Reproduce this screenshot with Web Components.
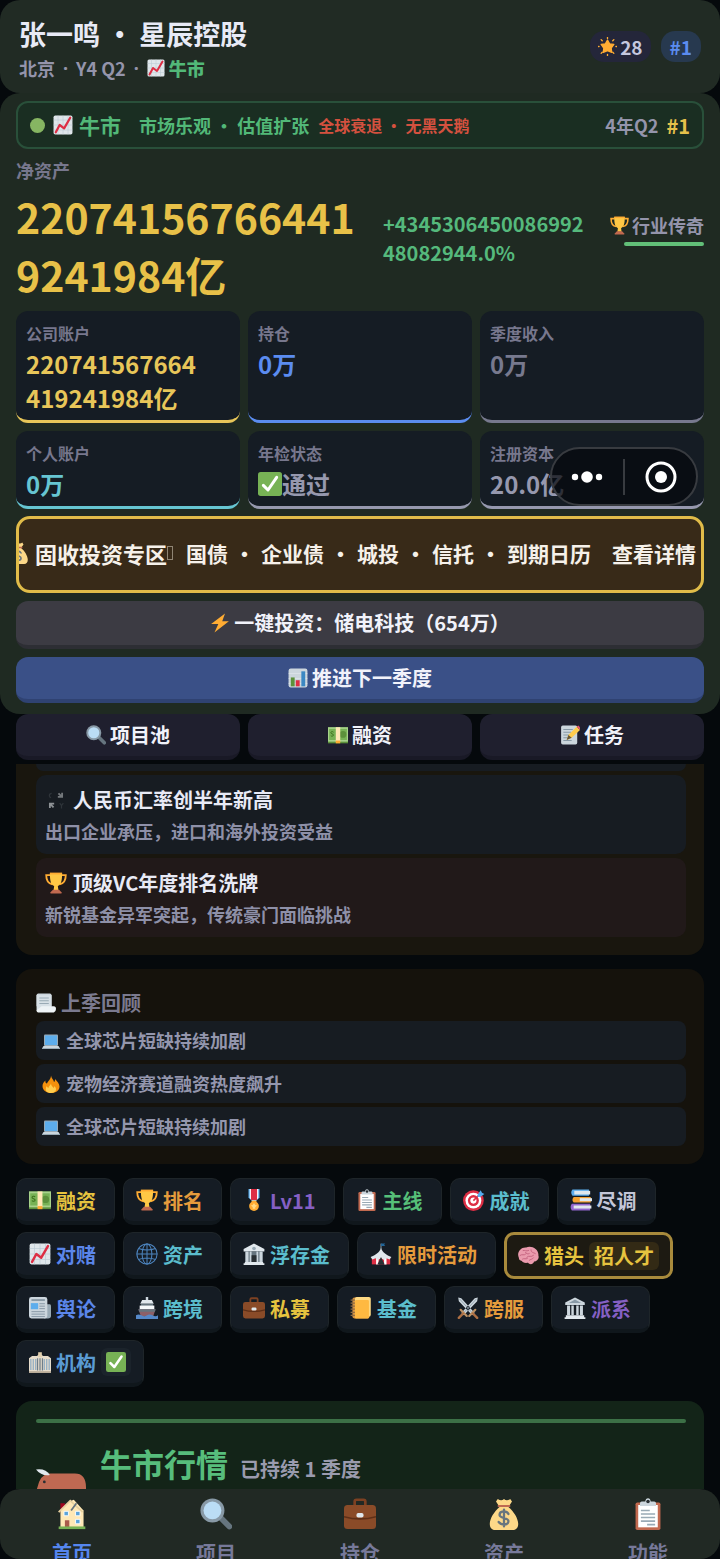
<!DOCTYPE html>
<html lang="zh-CN">
<head>
<meta charset="utf-8">
<meta name="viewport" content="width=device-width, initial-scale=1">
<title>星辰控股</title>
<style>
  html, body { height: 100%; margin: 0; }
  body {
    background: #05090c;
    color: #e8eaf6;
    font-family: "Noto Sans CJK SC", "Noto Sans", sans-serif;
    font-weight: 700;
    overflow: hidden;
  }
</style>
</head>
<body>
<game-app></game-app>

<script>
// ---------- icons, all on a 36 x 36 grid ----------
const ICONS = {
  chart: `<rect x="1" y="1" width="34" height="34" rx="3" fill="#dfe6ea"/><path d="M1 9h34M1 18h34M1 27h34M9 1v34M18 1v34M27 1v34" stroke="#b9c9d3" stroke-width="1"/><path d="M5 31l7-13 8 6L31 5" fill="none" stroke="#dd2e44" stroke-width="4" stroke-linecap="round" stroke-linejoin="round"/>`,
  sun: `<path d="M18 1v2M18 33v2M1 18h1M34 18h1M6 5l2 2M28 29l2 2M30 5l-2 2M6 31l2-2" stroke="#ffac33" stroke-width="2.6" stroke-linecap="round"/><path d="M18 6l4 7 8 1-5 7 1 8-8-3-8 3 1-8-5-7 8-1z" fill="#ffac33" stroke="#ffac33" stroke-width="2.5" stroke-linejoin="round"/>`,
  trophy: `<path d="M9 5H2c0 9 3 14 10 15M27 5h7c0 9-3 14-10 15" fill="none" stroke="#ffac33" stroke-width="3"/><path d="M8 2h20c0 13-2 19-7 21l1 7h-8l1-7C10 21 8 15 8 2z" fill="#ffc845"/><path d="M8 1h20v3H8z" fill="#ffac33"/><path d="M13 29h10l4 4v2H9v-2z" fill="#c1694f"/>`,
  check: `<rect width="36" height="36" rx="4" fill="#77b255"/><path d="M8 20l7 7L28 8" fill="none" stroke="#fff" stroke-width="4.5" stroke-linecap="round" stroke-linejoin="round"/>`,
  bag: `<path d="M11 1q4 3 7 0 3 3 7 0l2 3-4 6c6 5 11 13 11 19 0 4-2 7-6 7H8c-4 0-6-3-6-7C2 23 7 15 13 10L9 4z" fill="#fdd888"/><path d="M12 9h12" stroke="#bf6952" stroke-width="2.5" stroke-linecap="round"/><path d="M23 18c-2-4-10-4-10 1 0 4 10 3 10 7 0 5-8 5-11 1M18 13v19" fill="none" stroke="#67757f" stroke-width="2.6" stroke-linecap="round"/>`,
  bolt: `<path d="M27 1L2 20h13l-7 15L34 15H22z" fill="#ffac33"/>`,
  bars: `<rect x="1" y="1" width="34" height="34" rx="4" fill="#ccd6dd"/><path d="M1 10h34M1 19h34M1 28h34" stroke="#e6edf1"/><path d="M5 17h7v16H5z" fill="#5c913b"/><path d="M14 22h7v11h-7z" fill="#dd2e44"/><path d="M24 6h7v27h-7z" fill="#3b88c3"/>`,
  search: `<path d="M23 22l10 10" stroke="#66757f" stroke-width="6.5" stroke-linecap="round"/><circle cx="14" cy="14" r="13.5" fill="#8899a6"/><circle cx="14" cy="14" r="10" fill="#bbddf5"/>`,
  cash: `<path d="M0 4h36v29H0z" fill="#5c913b"/><path d="M0 4h36v26H0z" fill="#a7d28b"/><path d="M2 7h32v20H2z" fill="#77b255"/><circle cx="27" cy="17" r="6" fill="#5c913b"/><path d="M10 13c-2-2-5-1-5 1s5 2 5 4-4 3-5 1" fill="none" stroke="#3e721d" stroke-width="1.8"/><path d="M14 4h8v26h-8z" fill="#ffe8b6"/><path d="M14 28h8v5h-8z" fill="#ffac33"/>`,
  memo: `<rect x="2" y="1" width="29" height="34" rx="3" fill="#ccd6dd"/><path d="M6 8h17M6 13h14M6 18h10M6 23h8M6 28h15" stroke="#8899a6" stroke-width="2"/><path d="M12 27l3-9L30 3l6 6-15 14z" fill="#ffcc4d"/><path d="M30 3l3-2 4 4-1 4z" fill="#ea596e"/><path d="M12 27l3-9 6 5z" fill="#66573a"/>`,
  fx: `<path d="M22 7l6 6M28 6v7h-7" fill="none" stroke="#74787c" stroke-width="3"/><path d="M14 30l-6-6M8 31v-7h7" fill="none" stroke="#8d9195" stroke-width="3"/><path d="M11 7c-5 0-5 7-1 7M24 23l3 4 3-4M27 27v5" fill="none" stroke="#2e3439" stroke-width="2"/>`,
  scroll: `<path d="M1 4q0-3 3-3h21q3 0 3 3v20H1z" fill="#ccd6dd"/><path d="M1 4h27v28H1z" fill="#d7e0e6"/><path d="M6 9h17M6 14h17M6 19h17" stroke="#99aab5" stroke-width="2"/><path d="M10 24h22q4 0 4 5t-4 6H4q-3 0-3-4z" fill="#eef3f6"/>`,
  laptop: `<rect x="4" y="5" width="28" height="23" rx="2" fill="#99aab5"/><path d="M6 7h24v19H6z" fill="#5dadec"/><path d="M3 28h30l3 5H0z" fill="#ccd6dd"/><path d="M0 32h36v2H0z" fill="#99aab5"/>`,
  fire: `<path d="M18 1c1 6 5 8 6 13 2-1 2-4 2-6 4 5 9 9 9 15 0 8-7 13-17 13S1 30 1 22c0-5 3-9 6-11-1 4 1 6 3 6 2-5 8-9 8-16z" fill="#f4900c"/><path d="M18 17c0 5 4 6 5 9 1-1 2-3 2-4 7 8 1 14-7 14S5 32 9 22c1 2 2 3 4 4 0-4 4-5 5-9z" fill="#ffcc4d"/>`,
  medal: `<path d="M9 0h18v14l-6 6h-6l-6-6z" fill="#55acee"/><path d="M11 0h14v15l-4 4h-6l-4-4z" fill="#fff"/><path d="M13 0h10v18H13z" fill="#dd2e44"/><path d="M14 19h8v3h-8z" fill="#ffac33"/><circle cx="18" cy="28" r="8" fill="#ffac33"/><path d="M18 23l2 3 3 1-3 3v3l-2-1-2 1v-3l-3-3 3-1z" fill="#ffd983"/>`,
  clipboard: `<rect x="4" y="5" width="28" height="31" rx="2" fill="#c1694f"/><path d="M7 8h22v25H7z" fill="#fff"/><path d="M9 9V6q0-2 2-2h4c0-5 6-5 6 0h4q2 0 2 2v3z" fill="#ccd6dd"/><circle cx="18" cy="4" r="2" fill="#292f33"/><path d="M10 14h10M10 18h16M10 22h16M10 26h16M17 30h9" stroke="#99aab5" stroke-width="1.8"/>`,
  target: `<circle cx="17" cy="19" r="17" fill="#dd2e44"/><circle cx="17" cy="19" r="13" fill="#fff"/><circle cx="17" cy="19" r="9" fill="#dd2e44"/><circle cx="17" cy="19" r="5" fill="#fff"/><path d="M17 19L30 6" stroke="#dd2e44" stroke-width="2.5"/><path d="M24 9l5-7 2 4 4 2-7 5h-4z" fill="#55acee"/>`,
  books: `<path d="M4 1h27v10H4q-4-5 0-10z" fill="#5dadec"/><path d="M7 3h26v6H7z" fill="#e1e8ed"/><path d="M6 13h28v9H6q-4-4 0-9z" fill="#f4a12f"/><path d="M16 15h20v5H16z" fill="#e1e8ed"/><path d="M3 24h30v11H3q-4-6 0-11z" fill="#9266cc"/><path d="M6 27h29v5H6z" fill="#e1e8ed"/>`,
  globe: `<g fill="none" stroke="#4c83bd" stroke-width="1.7"><circle cx="18" cy="18" r="16.5"/><ellipse cx="18" cy="18" rx="8" ry="16.5"/><path d="M18 1v34M1 18h34M4 9q14 5 28 0M4 27q14-5 28 0"/></g>`,
  bank: `<path d="M18 1l17 9v4H1v-4z" fill="#e1e8ed"/><path d="M4 14h28v18H4z" fill="#66757f"/><path d="M4 14h5v18H4zM11 14h3v18h-3zM22 14h3v18h-3zM27 14h5v18h-5z" fill="#ccd6dd"/><path d="M14 20h8v12h-8z" fill="#292f33"/><path d="M3 31h30v2H3zM1 33h34v3H1z" fill="#e1e8ed"/><circle cx="18" cy="9" r="3" fill="#99aab5"/>`,
  temple: `<path d="M18 1l16 8v4H2V9z" fill="#ccd6dd"/><path d="M18 4l10 6H8z" fill="#8899a6"/><path d="M5 14h5v16H5zM12 14h4v16h-4zM20 14h4v16h-4zM26 14h5v16h-5z" fill="#ccd6dd"/><path d="M3 30h30v3H3zM1 33h34v3H1z" fill="#e1e8ed"/>`,
  tent: `<path d="M18 10V1" stroke="#99aab5" stroke-width="1.5"/><path d="M18 1h7l-2 2 2 2h-7z" fill="#226699"/><path d="M3 23h30v12H3z" fill="#dd2e44"/><path d="M10 23h4v12h-4zM23 23h4v12h-4z" fill="#fff"/><path d="M18 8c3 8 9 11 17 15l-3 4-5-2-4 3-5-3-5 3-4-3-5 2-3-4C9 19 15 16 18 8z" fill="#e1e8ed"/><path d="M18 23l6 12H12z" fill="#292f33"/>`,
  brain: `<path d="M3 21C-1 12 6 3 15 4c8-4 21 2 20 13 2 6-3 10-7 10-2 6-8 5-10 2-6 1-9-1-10-3-3 0-5-2-5-5z" fill="#ea9aad"/><path d="M5 17c4-3 6 1 9-2M10 9c3-1 5 2 9 0M16 20c4-4 7 1 11-3M23 8c0 5 4 4 7 6M9 23c3-2 5 1 8-1M27 21c-2 3-5 2-7 4M14 12c1 3 4 3 6 2" fill="none" stroke="#c5637f" stroke-width="1.6" stroke-linecap="round"/>`,
  news: `<path d="M25 12h9q2 0 2 3v16q0 4-5 4h-6z" fill="#99aab5"/><rect x="0" y="0" width="30" height="35" rx="4" fill="#ccd6dd"/><path d="M4 5h22" stroke="#8899a6" stroke-width="3"/><path d="M3 10h12v10H3z" fill="#5dadec"/><path d="M17 11h9M17 15h9M17 19h9M4 24h22M4 28h22M4 32h22" stroke="#8899a6" stroke-width="1.6"/>`,
  ship: `<path d="M16 0h4v7h-4z" fill="#ccd6dd"/><path d="M10 5h16l3 6H7z" fill="#e1e8ed"/><path d="M8 11h20v4H8z" fill="#66757f"/><path d="M6 14h24v7H6z" fill="#f5f8fa"/><path d="M4 20h28l-4 12H8z" fill="#8c6068"/><path d="M4 20h28l-1 4H5z" fill="#66757f"/><path d="M0 30q4-3 9 0t9 0 9 0 9 0v6H0z" fill="#5588c8"/>`,
  briefcase: `<path d="M12 8V4q0-2 2-2h8q2 0 2 2v4" fill="none" stroke="#7d4122" stroke-width="3"/><rect x="0" y="8" width="36" height="27" rx="4" fill="#8a4b28"/><path d="M0 21q18 5 36 0" fill="none" stroke="#5e2f17" stroke-width="1.8"/><rect x="14" y="17" width="8" height="5" rx="2" fill="#e1e8ed"/>`,
  ledger: `<rect x="4" y="1" width="28" height="34" rx="3" fill="#d69241"/><rect x="8" y="0" width="26" height="32" rx="3" fill="#ffd983"/><rect x="8" y="5" width="23" height="30" rx="2" fill="#ffb941"/><path d="M1 5h7M1 10h7M1 15h7M1 20h7M1 25h7M1 30h7" stroke="#8d6b43" stroke-width="2"/>`,
  swords: `<path d="M2 1l5 1 22 24-4 4L3 7zM34 1l-5 1L7 26l4 4L33 7z" fill="#ccd6dd"/><path d="M4 3l22 24M32 3L10 27" stroke="#8899a6" stroke-width="1.3"/><path d="M20 31l10-10M16 31L6 21" stroke="#be9366" stroke-width="3.5" stroke-linecap="round"/><path d="M26 27l7 7M10 27l-7 7" stroke="#ae7044" stroke-width="4" stroke-linecap="round"/>`,
  hotel: `<path d="M0 12l5-4h8l5-4 5 4h8l5 4v23H0z" fill="#e6dccb"/><path d="M15 2h6v8h-6z" fill="#e1cfae"/><path d="M3 13v18M7 13v18M11 13v18M25 13v18M29 13v18M33 13v18" stroke="#8fadc4" stroke-width="2"/><path d="M14 12v20M18 12v20M22 12v20" stroke="#6e7e8a" stroke-width="2"/><path d="M0 33h36v3H0z" fill="#b8ab98"/>`,
  house: `<path d="M5 6h5v10H5z" fill="#a0041e"/><path d="M5 14L15 4l5-2 11 12v19H5z" fill="#ffe8b6"/><path d="M3 16L16 3l14 13" fill="none" stroke="#e6d0a0" stroke-width="2"/><path d="M17 14l6-8" stroke="#66757f" stroke-width="2"/><path d="M9 15h5v5H9zM22 15h5v5h-5zM22 24h5v5h-5z" fill="#5da4d9" stroke="#fff"/><path d="M10 25h5v8h-5z" fill="#a95b4b"/><path d="M3 32h30v3H3z" fill="#77b255"/>`,
  ox: `<path d="M1 14Q3 5 9 4h19q8 0 8 10v16h-3V15l-1 21h-5v-9H12v9H7V24H2q-3-4-1-10z" fill="#bf6952"/><path d="M0 1q7-1 10 4-6 1-10-4z" fill="#e1e8ed"/><circle cx="6" cy="10" r="1" fill="#292f33"/>`
};

// Registers an element whose shadow root is cloned from a template.
function define(tag, html, setup) {
  const tpl = document.createElement('template');
  tpl.innerHTML = html;
  customElements.define(tag, class extends HTMLElement {
    constructor() {
      super();
      this.attachShadow({ mode: 'open' }).append(tpl.content.cloneNode(true));
    }
    connectedCallback() {
      if (this._ready) return;
      this._ready = true;
      if (setup) setup(this, this.shadowRoot);
    }
  });
}

define('ui-icon', `
  <style>
    :host { display: inline-block; flex: none; width: var(--icon, 20px); height: var(--icon, 20px); }
    svg { display: block; width: 100%; height: 100%; }
  </style>
  <svg viewBox="0 0 36 36" aria-hidden="true"></svg>
`, (el, root) => {
  root.querySelector('svg').innerHTML = ICONS[el.getAttribute('name')] || '';
});

define('app-header', `
  <style>
    :host {
      display: flex; align-items: center; justify-content: space-between;
      padding: 14px 19px 11px; border-radius: 20px; background: #212b24;
    }
    h1 { margin: 0; font-size: 27px; line-height: 40px; }
    p { display: flex; align-items: center; gap: 8px; margin: 0; font-size: 18px; line-height: 28px; color: #9494ab; --icon: 18px; }
    i { font-family: "Noto Sans", sans-serif; font-style: normal; }
    b { display: flex; align-items: center; gap: 4px; color: #52b878; }
    .pills { display: flex; gap: 10px; padding-bottom: 3px; --icon: 19px; }
    .pill {
      display: flex; align-items: center; gap: 3px; padding: 0 8px;
      border-radius: 14px; background: #24263a; color: #c5c8de; font-size: 19px; line-height: 31px;
    }
    .rank { padding: 0 9px; background: #27394f; color: #5b8cf0; }
  </style>
  <div>
    <h1>张一鸣 • 星辰控股</h1>
    <p>北京<i>·</i><span>Y4 Q2</span><i>·</i><b><ui-icon name="chart"></ui-icon>牛市</b></p>
  </div>
  <div class="pills">
    <span class="pill"><ui-icon name="sun"></ui-icon>28</span>
    <span class="pill rank">#1</span>
  </div>
`);

define('market-strip', `
  <style>
    :host {
      display: flex; align-items: center; box-sizing: border-box; min-height: 48px;
      padding: 0 12px; border: 2px solid #29503a; border-radius: 12px;
      background: #1a2e22; color: #52b878; font-size: 18px; white-space: nowrap;
    }
    i { width: 15px; height: 15px; margin-right: 8px; border-radius: 50%; background: #86b562; }
    .state { margin: 0 18px 0 6px; font-size: 21px; }
    .alert { margin-left: 9px; font-size: 16px; color: #d4513f; }
    .when { margin-left: auto; color: #9494ab; }
    .rank { margin-left: 8px; font-size: 20px; color: #e5c04b; }
  </style>
  <i></i><ui-icon name="chart"></ui-icon>
  <span class="state">牛市</span>
  <span>市场乐观 • 估值扩张</span>
  <span class="alert">全球衰退 • 无黑天鹅</span>
  <span class="when">4年Q2</span>
  <span class="rank">#1</span>
`);

define('net-worth', `
  <style>
    :host { display: block; padding: 8px 0; }
    .label { font-size: 18px; line-height: 26px; color: #77778d; }
    .row { display: grid; grid-template-columns: 5fr 3fr auto; gap: 17px; margin-top: 4px; }
    .total { font-size: 41px; line-height: 58px; color: #e8c148; word-break: break-all; }
    .change { padding-top: 22px; font-size: 20px; line-height: 29px; color: #55b97c; word-break: break-all; }
    .title { display: flex; flex-direction: column; align-items: flex-end; padding-top: 22px; }
    .title span { display: flex; align-items: center; gap: 3px; font-size: 18px; line-height: 32px; color: #9494ab; --icon: 19px; }
    .bar { width: 85%; height: 4px; margin-top: 1px; border-radius: 2px; background: #62bf78; }
  </style>
  <div class="label">净资产</div>
  <div class="row">
    <div class="total">220741567664419241984亿</div>
    <div class="change">+434530645008699248082944.0%</div>
    <div class="title"><span><ui-icon name="trophy"></ui-icon>行业传奇</span><div class="bar"></div></div>
  </div>
`);

define('stat-card', `
  <style>
    :host {
      display: block; padding: 10px 10px 5px; border-bottom: 3px solid var(--tone);
      border-radius: 12px; background: #151c24;
    }
    .label { font-size: 16px; line-height: 24px; color: #77778d; }
    .value {
      display: flex; align-items: center; max-width: 88%; margin-top: 2px;
      font-size: 24px; line-height: 34px; color: var(--tone); --icon: 24px; word-break: break-all;
    }
  </style>
  <div class="label"></div>
  <div class="value"><slot></slot></div>
`, (el, root) => {
  root.querySelector('.label').textContent = el.getAttribute('label');
});

// Floating host menu that sits over the cards
define('capsule-menu', `
  <style>
    :host {
      position: absolute; right: 22px; bottom: 208px; display: flex; align-items: center;
      box-sizing: border-box; width: 148px; height: 59px;
      border: 2px solid #383b40; border-radius: 30px; background: rgba(6, 9, 13, .72);
    }
    button { flex: 1; display: flex; justify-content: center; padding: 0; border: 0; background: none; }
    button + button { border-left: 2px solid #383b40; }
    svg { width: 36px; height: 36px; fill: #fff; }
  </style>
  <button aria-label="更多"><svg viewBox="0 0 36 36"><circle cx="5" cy="18" r="3.2"/><circle cx="17" cy="18" r="5.8"/><circle cx="29" cy="18" r="3.2"/></svg></button>
  <button aria-label="关闭"><svg viewBox="0 0 36 36"><circle cx="18" cy="18" r="14" fill="none" stroke="#fff" stroke-width="3"/><circle cx="18" cy="18" r="6"/></svg></button>
`);

define('bond-banner', `
  <style>
    :host { display: block; }
    button {
      display: flex; align-items: center; justify-content: flex-end; box-sizing: border-box;
      width: 100%; height: 77px; padding: 0 5px 3px 0; overflow: hidden;
      border: 3px solid #e0bc49; border-radius: 14px; background: #382a18;
      color: #f6f1ea; font: inherit; font-size: 21px; white-space: nowrap; --icon: 22px;
    }
    .name { margin-left: 6px; font-size: 22px; }
    .box { flex: none; box-sizing: border-box; width: 6px; height: 14px; margin: 0 13px 0 0; border: 1px solid #8f8574; }
    .kinds { display: flex; gap: 6px; }
    .more { margin-left: 21px; }
  </style>
  <button>
    <ui-icon name="bag"></ui-icon>
    <span class="name">固收投资专区</span><span class="box"></span>
    <span class="kinds"><span>国债</span> <span>•</span> <span>企业债</span> <span>•</span> <span>城投</span> <span>•</span> <span>信托</span> <span>•</span> <span>到期日历</span></span>
    <span class="more">查看详情</span>
  </button>
`);

define('action-button', `
  <style>
    :host { display: block; --face: #1f1f2e; --edge: #191926; }
    :host([kind="grey"]) { --face: #3c3b43; --edge: #2d2e34; }
    :host([kind="blue"]) { --face: #3a5087; --edge: #2f4272; }
    button {
      display: flex; align-items: center; justify-content: center; gap: 4px;
      box-sizing: border-box; width: 100%; min-height: 46px; padding: 0;
      border: 0; border-bottom: 4px solid var(--edge); border-radius: 12px;
      background: var(--face); color: #f1f2fa; font: inherit; font-size: 20px; line-height: 30px;
    }
    :host([kind="grey"]) button { min-height: 48px; }
  </style>
  <button><slot></slot></button>
`);

define('fold-card', `
  <style>
    :host {
      display: flex; flex-direction: column; gap: 4px;
      padding: 20px 18px 18px 20px; border-radius: 16px; background: #15120c;
    }
    :host([cut]) { padding-top: 0; border-radius: 0 0 16px 16px; background: #19160e; }
  </style>
  <slot></slot>
`);

define('news-item', `
  <style>
    :host { display: block; padding: 10px 9px 9px; border-radius: 10px; background: #171c22; }
    :host([hot]) { background: #211919; }
    h3 { display: flex; align-items: center; gap: 6px; margin: 0; font-size: 20px; line-height: 30px; --icon: 22px; }
    p { margin: 0; padding: 2px 0 0; font-size: 18px; line-height: 28px; color: #8e90a8; }
  </style>
  <h3><slot name="title"></slot></h3>
  <p><slot></slot></p>
`);

define('review-item', `
  <style>
    :host {
      display: flex; align-items: center; gap: 6px; padding: 0 6px; border-radius: 8px;
      background: #171c22; color: #9496ad; font-size: 18px; line-height: 39px; --icon: 18px;
    }
  </style>
  <slot></slot>
`);

define('tool-chip', `
  <style>
    :host { display: block; --icon: 22px; }
    button {
      display: flex; align-items: center; gap: 5px; box-sizing: border-box; height: 47px;
      padding: 0 18px 0 12px; border: 1px solid #1e2529; border-bottom: 4px solid #10171c;
      border-radius: 10px; background: #151c24; color: var(--tone); font: inherit; font-size: 20px;
    }
    slot[name="tag"]::slotted(*) {
      display: flex; align-items: center; height: 28px; padding: 0 5px;
      border-radius: 6px; background: #1b232b; --icon: 20px;
    }
    :host([tagged]) button { padding-right: 12px; }
    :host([glow]) button { border: 3px solid #a88a3c; background: #1d1a12; padding: 0 11px 0 10px; }
    :host([glow]) slot[name="tag"]::slotted(*) { background: #332a15; }
  </style>
  <button><slot></slot><slot name="tag"></slot></button>
`, (el, root) => {
  const icon = document.createElement('ui-icon');
  icon.setAttribute('name', el.getAttribute('icon'));
  root.querySelector('button').prepend(icon);
});

define('market-card', `
  <style>
    :host { display: block; padding: 18px 18px 0 20px; border-radius: 16px 16px 0 0; background: #132418; }
    .bar { height: 4px; border-radius: 2px; background: #3c7046; }
    .row { display: flex; align-items: flex-start; margin-top: 17px; --icon: 50px; }
    ui-icon { margin: 28px 14px 0 0; }
    h2 { display: flex; align-items: baseline; gap: 12px; margin: 0; font-size: 32px; line-height: 46px; color: #57bd7c; }
    small { font-size: 20px; color: #9a9bae; }
  </style>
  <div class="bar"></div>
  <div class="row"><ui-icon name="ox"></ui-icon><h2>牛市行情 <small>已持续 1 季度</small></h2></div>
`);

define('tab-item', `
  <style>
    :host { flex: 1; --icon: 32px; }
    a {
      display: flex; flex-direction: column; align-items: center; gap: 8px; padding-top: 9px;
      color: #77799a; font-size: 20px; line-height: 30px; text-decoration: none;
    }
    :host([active]) a { color: #5586ee; }
  </style>
  <a href="#"><slot></slot></a>
`);

define('tab-bar', `
  <style>
    :host {
      display: flex; flex: none; height: 70px; overflow: hidden;
      border-radius: 20px; background: #212924;
    }
  </style>
  <slot></slot>
`);

define('game-app', `
  <style>
    :host { display: flex; flex-direction: column; height: 100vh; }
    .panel { position: relative; padding: 8px 16px 11px; border-radius: 20px; background: #1f2a22; }
    .grid { display: grid; grid-template-columns: repeat(3, minmax(0, 1fr)); gap: 8px; }
    .stack { display: flex; flex-direction: column; gap: 8px; margin-top: 7px; }
    .quick { padding: 0 16px 4px; }
    .feed { flex: 1; min-height: 0; overflow: hidden; display: flex; flex-direction: column; padding: 0 16px; }
    .feed > * { flex: none; }
    .feed fold-card { margin-bottom: 14px; }
    .stub { height: 7px; border-radius: 0 0 10px 10px; background: #171c22; }
    h2 { display: flex; align-items: center; gap: 5px; margin: 0; font-size: 20px; line-height: 28px; color: #7b7a8f; }
    .chips { display: flex; flex-wrap: wrap; gap: 7px 8px; margin-bottom: 14px; }
  </style>
  <app-header></app-header>
  <section class="panel">
    <market-strip></market-strip>
    <net-worth></net-worth>
    <div class="grid">
      <stat-card label="公司账户" style="--tone:#e8c659">220741567664419241984亿</stat-card>
      <stat-card label="持仓" style="--tone:#5b8cf0">0万</stat-card>
      <stat-card label="季度收入" style="--tone:#77798e">0万</stat-card>
      <stat-card label="个人账户" style="--tone:#66c5d2">0万</stat-card>
      <stat-card label="年检状态" style="--tone:#9698ae"><ui-icon name="check"></ui-icon>通过</stat-card>
      <stat-card label="注册资本" style="--tone:#9698ae">20.0亿</stat-card>
    </div>
    <div class="stack">
      <bond-banner></bond-banner>
      <action-button kind="grey"><ui-icon name="bolt"></ui-icon>一键投资：储电科技（654万）</action-button>
      <action-button kind="blue"><ui-icon name="bars"></ui-icon>推进下一季度</action-button>
    </div>
    <capsule-menu></capsule-menu>
  </section>
  <div class="grid quick">
    <action-button><ui-icon name="search"></ui-icon>项目池</action-button>
    <action-button><ui-icon name="cash"></ui-icon>融资</action-button>
    <action-button><ui-icon name="memo"></ui-icon>任务</action-button>
  </div>
  <main class="feed">
    <fold-card cut>
      <div class="stub"></div>
      <news-item><ui-icon slot="title" name="fx"></ui-icon><span slot="title">人民币汇率创半年新高</span>出口企业承压，进口和海外投资受益</news-item>
      <news-item hot><ui-icon slot="title" name="trophy"></ui-icon><span slot="title">顶级VC年度排名洗牌</span>新锐基金异军突起，传统豪门面临挑战</news-item>
    </fold-card>
    <fold-card>
      <h2><ui-icon name="scroll"></ui-icon>上季回顾</h2>
      <review-item><ui-icon name="laptop"></ui-icon>全球芯片短缺持续加剧</review-item>
      <review-item><ui-icon name="fire"></ui-icon>宠物经济赛道融资热度飙升</review-item>
      <review-item><ui-icon name="laptop"></ui-icon>全球芯片短缺持续加剧</review-item>
    </fold-card>
    <div class="chips">
      <tool-chip icon="cash" style="--tone:#e6c33f">融资</tool-chip>
      <tool-chip icon="trophy" style="--tone:#e59b3c">排名</tool-chip>
      <tool-chip icon="medal" style="--tone:#8560c4">Lv11</tool-chip>
      <tool-chip icon="clipboard" style="--tone:#56bf78">主线</tool-chip>
      <tool-chip icon="target" style="--tone:#5bbdcd">成就</tool-chip>
      <tool-chip icon="books" style="--tone:#c3c6d8">尽调</tool-chip>
      <tool-chip icon="chart" style="--tone:#5b86ea">对赌</tool-chip>
      <tool-chip icon="globe" style="--tone:#5bbdcd">资产</tool-chip>
      <tool-chip icon="bank" style="--tone:#5bbdcd">浮存金</tool-chip>
      <tool-chip icon="tent" style="--tone:#e59b3c">限时活动</tool-chip>
      <tool-chip icon="brain" tagged glow style="--tone:#e6c33f">猎头<span slot="tag">招人才</span></tool-chip>
      <tool-chip icon="news" style="--tone:#5b86ea">舆论</tool-chip>
      <tool-chip icon="ship" style="--tone:#5bbdcd">跨境</tool-chip>
      <tool-chip icon="briefcase" style="--tone:#e6c33f">私募</tool-chip>
      <tool-chip icon="ledger" style="--tone:#5bbdcd">基金</tool-chip>
      <tool-chip icon="swords" style="--tone:#e59b3c">跨服</tool-chip>
      <tool-chip icon="temple" style="--tone:#8560c4">派系</tool-chip>
      <tool-chip icon="hotel" tagged style="--tone:#5a9bd4">机构<span slot="tag"><ui-icon name="check"></ui-icon></span></tool-chip>
    </div>
    <market-card></market-card>
  </main>
  <tab-bar>
    <tab-item active><ui-icon name="house"></ui-icon>首页</tab-item>
    <tab-item><ui-icon name="search"></ui-icon>项目</tab-item>
    <tab-item><ui-icon name="briefcase"></ui-icon>持仓</tab-item>
    <tab-item><ui-icon name="bag"></ui-icon>资产</tab-item>
    <tab-item><ui-icon name="clipboard"></ui-icon>功能</tab-item>
  </tab-bar>
`);
</script>
</body>
</html>
